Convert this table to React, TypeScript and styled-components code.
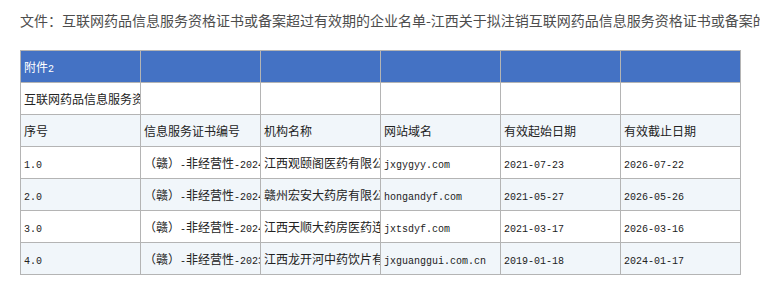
import styled, { createGlobalStyle } from 'styled-components';

const GlobalStyle = createGlobalStyle`
  html, body {
    margin: 0;
    padding: 0;
    background: #fff;
    overflow: hidden;
  }
`;

const columns = ['序号', '信息服务证书编号', '机构名称', '网站域名', '有效起始日期', '有效截止日期'];

const rows = [
  ['1.0', '（赣）-非经营性-2024-0001', '江西观颐阁医药有限公司', 'jxgygyy.com', '2021-07-23', '2026-07-22'],
  ['2.0', '（赣）-非经营性-2024-0002', '赣州宏安大药房有限公司', 'hongandyf.com', '2021-05-27', '2026-05-26'],
  ['3.0', '（赣）-非经营性-2024-0003', '江西天顺大药房医药连锁有限公司', 'jxtsdyf.com', '2021-03-17', '2026-03-16'],
  ['4.0', '（赣）-非经营性-2023-0004', '江西龙开河中药饮片有限公司', 'jxguanggui.com.cn', '2019-01-18', '2024-01-17'],
];

// split mixed text so that ASCII runs use the narrow mono face
function Mixed({ text }: { text: string }) {
  const parts = text.match(/[\x20-\x7e]+|[^\x20-\x7e]+/g) || [];
  return (
    <>
      {parts.map((p, i) =>
        /^[\x20-\x7e]+$/.test(p) ? <Ascii key={i}>{p}</Ascii> : <Cjk key={i}>{p}</Cjk>,
      )}
    </>
  );
}

function App() {
  return (
    <StyledPage>
      <GlobalStyle />
      <StyledTitle>
        文件：互联网药品信息服务资格证书或备案超过有效期的企业名单-江西关于拟注销互联网药品信息服务资格证书或备案的公告
      </StyledTitle>
      <StyledTable>
        <colgroup>
          {columns.map((c) => (
            <col key={c} style={{ width: 120 }} />
          ))}
        </colgroup>
        <tbody>
          <StyledRow $variant="head">
            <StyledCell $light>
              <Mixed text="附件2" />
            </StyledCell>
            {columns.slice(1).map((c) => (
              <StyledCell key={c} />
            ))}
          </StyledRow>
          <StyledRow $variant="plain">
            <StyledCell>
              <Mixed text="互联网药品信息服务资格证书或备案超过有效期的企业名单" />
            </StyledCell>
            {columns.slice(1).map((c) => (
              <StyledCell key={c} />
            ))}
          </StyledRow>
          <StyledRow $variant="tint">
            {columns.map((c) => (
              <StyledCell key={c}>
                <Cjk>{c}</Cjk>
              </StyledCell>
            ))}
          </StyledRow>
          {rows.map((r, i) => (
            <StyledRow key={r[0]} $variant={i % 2 === 0 ? 'plain' : 'tint'}>
              {r.map((v, j) => (
                <StyledCell key={j}>
                  <Mixed text={v} />
                </StyledCell>
              ))}
            </StyledRow>
          ))}
        </tbody>
      </StyledTable>
    </StyledPage>
  );
}

const StyledPage = styled.div`
  padding: 10px 20px;
  width: 720px;
`;

const StyledTitle = styled.div`
  height: 20px;
  line-height: 20px;
  margin-bottom: 20px;
  font-family: 'Noto Sans CJK SC', sans-serif;
  font-size: 14px;
  color: #4d4d4d;
  white-space: nowrap;
`;

const StyledTable = styled.table`
  width: 721px;
  table-layout: fixed;
  border-collapse: collapse;
`;

const StyledRow = styled.tr<{ $variant: 'head' | 'plain' | 'tint' }>`
  height: 32px;
  background-color: ${({ $variant }) =>
    $variant === 'head' ? '#4472c4' : $variant === 'tint' ? '#f1f6fa' : '#fff'};
`;

const StyledCell = styled.td<{ $light?: boolean }>`
  border: 1px solid #b4b4b4;
  padding: 0 2px 0 3px;
  overflow: hidden;
  white-space: nowrap;
  vertical-align: middle;
  color: ${({ $light }) => ($light ? '#fff' : '#222')};
`;

const Cjk = styled.span`
  font-family: 'Noto Sans CJK SC', sans-serif;
  font-size: 12px;
`;

const Ascii = styled.span`
  font-family: 'Liberation Mono', monospace;
  font-size: 10px;
`;

export default App;
